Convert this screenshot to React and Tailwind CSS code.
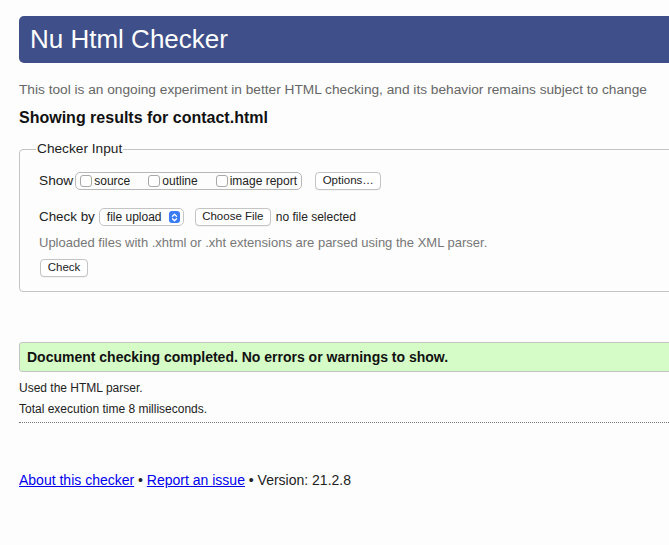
function Box({ label, gap }) {
  return (
    <span className={`flex items-center ${gap}`}>
      <span className="h-[12px] w-[12px] rounded-[3px] border border-[#a8a8a8] bg-white" />
      <span className="ml-[2px] text-[12px] text-[#222]">{label}</span>
    </span>
  );
}

function Btn({ children, w }) {
  return (
    <span className={`flex h-[18px] ${w} items-center justify-center rounded-[4px] border border-[#c4c4c4] bg-white text-[11.5px] text-[#222] shadow-[0_0.5px_0_rgba(0,0,0,0.08)]`}>
      {children}
    </span>
  );
}

export default function App() {
  return (
    <div className="h-[545px] w-[669px] overflow-hidden bg-[#fdfdfd] font-['Liberation_Sans',Arial,sans-serif] text-[#222]">
      <div className="ml-[19px] w-[720px] pt-[16px]">
        <h1 className="h-[47px] rounded-[5px] bg-[#3f4f8a] pl-[11px] text-[26px] leading-[47px] text-white">Nu Html Checker</h1>

        <p className="mt-[19px] text-[13.7px] leading-[16px] text-[#666]">
          This tool is an ongoing experiment in better HTML checking, and its behavior remains subject to change
        </p>

        <h2 className="mt-[10px] text-[16px] font-bold leading-[20px] text-[#111]">Showing results for contact.html</h2>

        <fieldset className="mt-[13px] rounded-[4px] border border-[#c4c4c4] pb-[14px] pl-[19px]">
          <legend className="-ml-[3px] px-[1px] text-[13.7px] leading-[16px] text-[#222]">Checker Input</legend>

          <div className="mt-[15px] flex h-[18px] items-center">
            <span className="text-[13.7px]">Show</span>
            <span className="ml-[2px] flex h-[18px] w-[227px] items-center rounded-[5px] border border-[#b8b8b8] pl-[4px]">
              <Box label="source" gap="" />
              <Box label="outline" gap="ml-[18px]" />
              <Box label="image report" gap="ml-[18px]" />
            </span>
            <span className="ml-[13px]">
              <Btn w="w-[66px]">Options…</Btn>
            </span>
          </div>

          <div className="mt-[18px] flex h-[18px] items-center">
            <span className="text-[13.4px]">Check by</span>
            <span className="ml-[4px] flex h-[18px] w-[85px] items-center justify-between rounded-[5px] border border-[#c4c4c4] bg-white pl-[7px] pr-[3px]">
              <span className="text-[12px]">file upload</span>
              <span className="flex h-[12px] w-[11px] items-center justify-center rounded-[3px] bg-[#3b7cf4]">
                <svg width="7" height="9" viewBox="0 0 7 9" fill="none" stroke="white" strokeWidth="1.3" strokeLinecap="round" strokeLinejoin="round">
                  <path d="M1.5 3.2 3.5 1.3 5.5 3.2" />
                  <path d="M1.5 5.8 3.5 7.7 5.5 5.8" />
                </svg>
              </span>
            </span>
            <span className="ml-[11px]">
              <Btn w="w-[76px]">Choose File</Btn>
            </span>
            <span className="ml-[5px] text-[12px]">no file selected</span>
          </div>

          <p className="mt-[9px] text-[13px] leading-[15px] text-[#777]">
            Uploaded files with .xhtml or .xht extensions are parsed using the XML parser.
          </p>

          <div className="mt-[9px] flex">
            <span className="ml-[1px]">
              <Btn w="w-[48px]">Check</Btn>
            </span>
          </div>
        </fieldset>

        <div className="mt-[50px] flex h-[30px] items-center rounded-[3px] border border-[#c4c4c4] bg-[#d5fcc7] pl-[7px] text-[14px] font-bold text-[#111]">
          Document checking completed. No errors or warnings to show.
        </div>

        <p className="mt-[6px] text-[12px] leading-[21px]">Used the HTML parser.</p>
        <p className="text-[12px] leading-[21px]">Total execution time 8 milliseconds.</p>

        <div className="mt-[2px] border-t border-dotted border-[#777]" />

        <p className="mt-[49px] text-[14px] leading-[17px] text-[#222]">
          <a href="#" className="text-[#0000ee] underline">About this checker</a>
          {' • '}
          <a href="#" className="text-[#0000ee] underline">Report an issue</a>
          {' • Version: 21.2.8'}
        </p>
      </div>
    </div>
  );
}
